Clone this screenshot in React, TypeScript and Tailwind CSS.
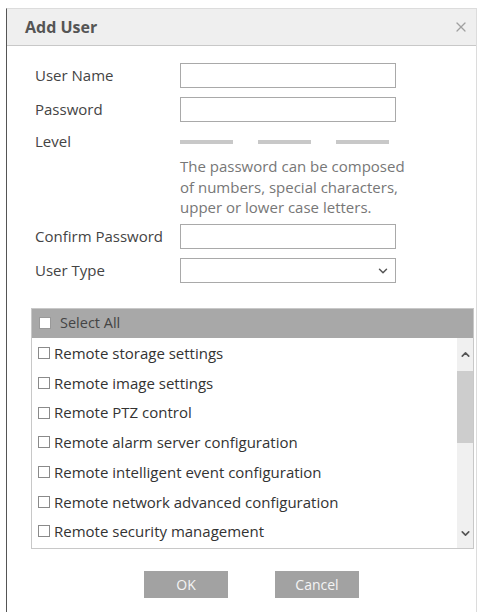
import { ChevronDown, ChevronUp, X } from 'lucide-react';

const permissions = [
  'Remote storage settings',
  'Remote image settings',
  'Remote PTZ control',
  'Remote alarm server configuration',
  'Remote intelligent event configuration',
  'Remote network advanced configuration',
  'Remote security management',
];

function Field({ label, select }: { label: string; select?: boolean }) {
  return (
    <div className="flex items-center h-[34px]">
      <span className="w-[145px] text-[15px] text-[#444]">{label}</span>
      <div className="relative w-[216px] h-[25px] border border-[#a9a9a9] bg-white">
        {select && (
          <ChevronDown className="absolute right-[5px] top-[5px] w-[14px] h-[14px] text-[#555]" strokeWidth={2.5} />
        )}
      </div>
    </div>
  );
}

export default function App() {
  return (
    <div className="w-[478px] h-[612px] bg-white pt-[8px] pl-[6px] overflow-hidden" style={{ fontFamily: '"Open Sans", "Noto Sans", sans-serif' }}>
      <div className="w-[471px] h-[620px] border-l border-l-[#555] border-t border-r border-[#dcdcdc] bg-white">
        {/* header */}
        <div className="h-[37px] bg-[#efefef] border-b border-[#c8c8c8] flex items-center justify-between pl-[18px] pr-[7px]">
          <span className="text-[16px] font-bold text-[#555]">Add User</span>
          <X className="w-[16px] h-[16px] text-[#a0a0a0]" strokeWidth={1.8} />
        </div>

        {/* form */}
        <div className="pl-[28px] pt-[12px]">
          <Field label="User Name" />
          <Field label="Password" />
          <div className="flex h-[30px] items-center">
            <span className="w-[145px] text-[15px] text-[#444]">Level</span>
            <div className="flex gap-[25px] pt-[2px]">
              <div className="w-[53px] h-[4px] bg-[#c8c8c8]" />
              <div className="w-[53px] h-[4px] bg-[#c8c8c8]" />
              <div className="w-[53px] h-[4px] bg-[#c8c8c8]" />
            </div>
          </div>
          <p className="ml-[145px] text-[15px] leading-[20.5px] text-[#777] w-[240px]">
            The password can be composed of numbers, special characters, upper or lower case letters.
          </p>
          <div className="mt-[2px]">
            <Field label="Confirm Password" />
            <Field label="User Type" select />
          </div>
        </div>

        {/* permissions */}
        <div className="ml-[24px] mt-[20px] w-[443px] border border-[#c8c8c8]">
          <div className="h-[29px] bg-[#a8a8a8] flex items-center pl-[7px] gap-[9px]">
            <span className="w-[12px] h-[12px] bg-white border border-[#999]" />
            <span className="text-[14.5px] text-[#444]">Select All</span>
          </div>
          <div className="flex h-[210px]">
            <div className="flex-1 pt-[1px]">
              {permissions.map((p) => (
                <div key={p} className="h-[29.7px] flex items-center pl-[6px] gap-[4px]">
                  <span className="w-[12px] h-[12px] border border-[#8a8a8a] bg-white" />
                  <span className="text-[15px] text-[#333]">{p}</span>
                </div>
              ))}
            </div>
            <div className="w-[16px] bg-[#f0f0f0] flex flex-col items-center">
              <ChevronUp className="w-[13px] h-[13px] mt-[10px] text-[#555]" strokeWidth={3} />
              <div className="w-[16px] h-[72px] mt-[10px] bg-[#cdcdcd]" />
              <div className="flex-1" />
              <ChevronDown className="w-[13px] h-[13px] mb-[8px] text-[#555]" strokeWidth={3} />
            </div>
          </div>
        </div>

        {/* buttons */}
        <div className="flex justify-center gap-[47px] mt-[22px] pl-[20px]">
          <button className="w-[84px] h-[27px] bg-[#a2a2a2] text-[14px] text-[#f4f4f4]">OK</button>
          <button className="w-[84px] h-[27px] bg-[#a2a2a2] text-[14px] text-[#f4f4f4]">Cancel</button>
        </div>
      </div>
    </div>
  );
}
